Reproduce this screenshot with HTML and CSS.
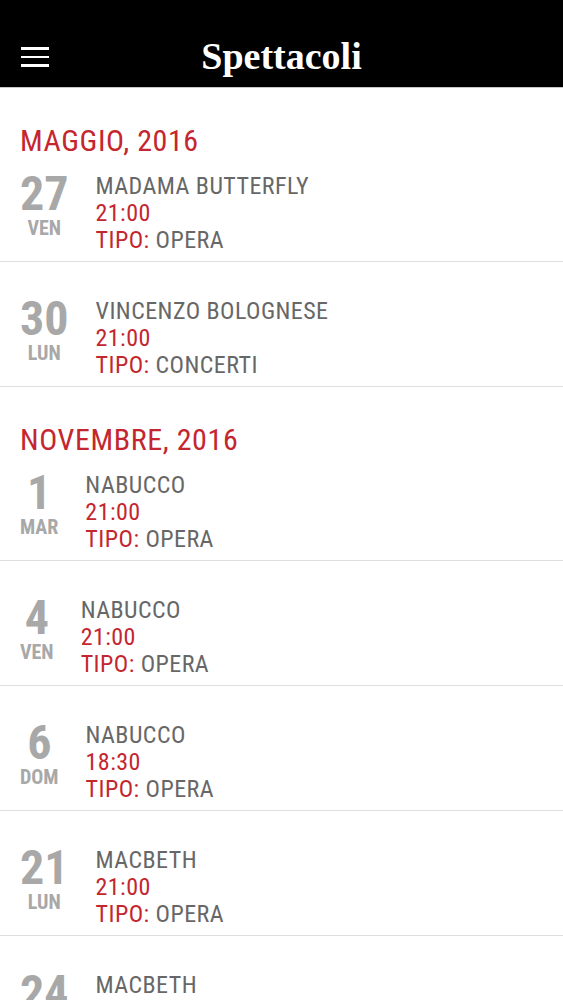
FILE: index.html
```html
<!DOCTYPE html>
<html lang="it">
<head>
<meta charset="utf-8">
<title>Spettacoli</title>
<link rel="stylesheet" href="styles.css">
</head>
<body>
<header class="topbar">
  <div class="menu-btn" aria-label="Menu">
    <span></span><span></span><span></span>
  </div>
  <h1 class="title">Spettacoli</h1>
  <div class="spacer"></div>
</header>

<main class="list">
  <section class="month">
    <h2 class="month-title">MAGGIO, 2016</h2>
    <div class="rows">
      <div class="row">
        <div class="date"><span class="num">27</span><span class="day">VEN</span></div>
        <div class="info">
          <div class="name">MADAMA BUTTERFLY</div>
          <div class="time">21:00</div>
          <div class="type"><span class="label">TIPO:</span> OPERA</div>
        </div>
      </div>
      <div class="row">
        <div class="date"><span class="num">30</span><span class="day">LUN</span></div>
        <div class="info">
          <div class="name">VINCENZO BOLOGNESE</div>
          <div class="time">21:00</div>
          <div class="type"><span class="label">TIPO:</span> CONCERTI</div>
        </div>
      </div>
    </div>
  </section>

  <section class="month">
    <h2 class="month-title">NOVEMBRE, 2016</h2>
    <div class="rows">
      <div class="row">
        <div class="date"><span class="num">1</span><span class="day">MAR</span></div>
        <div class="info">
          <div class="name">NABUCCO</div>
          <div class="time">21:00</div>
          <div class="type"><span class="label">TIPO:</span> OPERA</div>
        </div>
      </div>
      <div class="row">
        <div class="date"><span class="num">4</span><span class="day">VEN</span></div>
        <div class="info">
          <div class="name">NABUCCO</div>
          <div class="time">21:00</div>
          <div class="type"><span class="label">TIPO:</span> OPERA</div>
        </div>
      </div>
      <div class="row">
        <div class="date"><span class="num">6</span><span class="day">DOM</span></div>
        <div class="info">
          <div class="name">NABUCCO</div>
          <div class="time">18:30</div>
          <div class="type"><span class="label">TIPO:</span> OPERA</div>
        </div>
      </div>
      <div class="row">
        <div class="date"><span class="num">21</span><span class="day">LUN</span></div>
        <div class="info">
          <div class="name">MACBETH</div>
          <div class="time">21:00</div>
          <div class="type"><span class="label">TIPO:</span> OPERA</div>
        </div>
      </div>
      <div class="row">
        <div class="date"><span class="num">24</span><span class="day">GIO</span></div>
        <div class="info">
          <div class="name">MACBETH</div>
          <div class="time">21:00</div>
          <div class="type"><span class="label">TIPO:</span> OPERA</div>
        </div>
      </div>
    </div>
  </section>
</main>
</body>
</html>
```

FILE: styles.css
```css
* { box-sizing: border-box; }

html, body {
  margin: 0;
  padding: 0;
  background: #ffffff;
}

body {
  font-family: "Liberation Sans Narrow", "Roboto Condensed", "Arial Narrow", "Liberation Sans", sans-serif;
  font-stretch: condensed;
  overflow: hidden;
  height: 1000px;
}

.topbar {
  height: 88px;
  padding-top: 20px;
  background: #000;
  border-bottom: 1px solid #c8c8c8;
  display: grid;
  grid-template-columns: 1fr auto 1fr;
  align-items: center;
}

.menu-btn {
  padding-left: 21px;
  padding-top: 7px;
  display: flex;
  flex-direction: column;
  gap: 6px;
}

.menu-btn span {
  display: block;
  width: 28px;
  height: 2.5px;
  background: #fff;
}

.title {
  margin: 0;
  padding-top: 4px;
  font-family: "Liberation Serif", "Times New Roman", serif;
  font-weight: bold;
  font-size: 38px;
  line-height: 40px;
  color: #fff;
}

.month-title {
  margin: 0;
  padding: 38px 20px 0;
  font-size: 30px;
  line-height: 30px;
  font-weight: normal;
  letter-spacing: 0.6px;
  color: #c4262f;
}

.row {
  display: flex;
  align-items: flex-start;
  gap: 27px;
  padding: 33px 20px 7px;
  border-bottom: 1.5px solid #dedede;
}

.rows .row:first-child {
  padding-top: 14px;
}

.date {
  display: flex;
  flex-direction: column;
  align-items: center;
  color: #a8a8a8;
  font-weight: bold;
}

.num {
  font-size: 48px;
  line-height: 48px;
}

.day {
  font-size: 20px;
  line-height: 20px;
}

.info {
  margin-top: 3px;
  font-size: 24px;
  line-height: 27px;
  letter-spacing: 0.45px;
  color: #676767;
}

.time,
.label {
  color: #c4262f;
}
```
